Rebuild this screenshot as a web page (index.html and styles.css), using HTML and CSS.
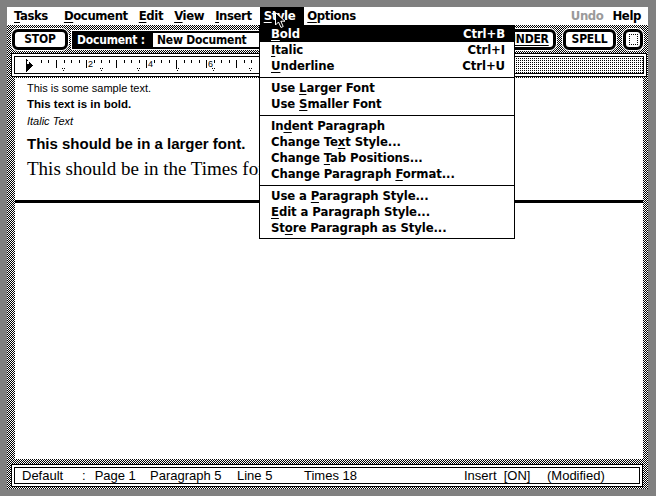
FILE: index.html
```html
<!DOCTYPE html>
<html>
<head>
<meta charset="utf-8">
<title>Write</title>
<link rel="stylesheet" href="styles.css">
</head>
<body>
<div class="screen">
  <div class="menubar">
    <span class="mi first"><u>T</u>asks</span>
    <span class="mi"><u>D</u>ocument</span>
    <span class="mi"><u>E</u>dit</span>
    <span class="mi"><u>V</u>iew</span>
    <span class="mi"><u>I</u>nsert</span>
    <span class="mi active"><u>S</u>tyle</span>
    <span class="mi"><u>O</u>ptions</span>
    <span class="spacer"></span>
    <span class="mi disabled">Undo</span>
    <span class="mi last">Help</span>
  </div>
  <div class="work">
    <div class="toolbar">
      <div class="btn stop">STOP</div>
      <div class="docgroup">
        <div class="doclabel">Document :</div>
        <div class="docfield">New Document</div>
      </div>
      <div class="btn under"><u>UNDER</u></div>
      <div class="btn spell">SPELL</div>
      <div class="btn small"><span class="icon"></span></div>
    </div>
    <div class="ruler">
      <svg class="ruler-svg" width="628" height="16" viewBox="0 0 628 16" shape-rendering="crispEdges">
        <defs>
          <pattern id="stip" width="2" height="2" patternUnits="userSpaceOnUse">
            <rect x="0" y="0" width="2" height="2" fill="#fff"/>
            <rect x="1" y="1" width="1" height="1" fill="#000"/>
          </pattern>
        </defs>
        <polygon points="11,2 11,15 18,8.5" fill="#000"/>
        <rect x="12" y="4" width="2" height="3" fill="#fff"/>
        <g fill="#000">
          <rect x="26" y="3" width="1" height="3"/><rect x="33" y="3" width="1" height="3"/>
          <rect x="41" y="3" width="1" height="8"/>
          <rect x="49" y="3" width="1" height="3"/><rect x="56" y="3" width="1" height="3"/><rect x="64" y="3" width="1" height="3"/>
          <rect x="71" y="3" width="1" height="8"/>
          <rect x="79" y="3" width="1" height="3"/><rect x="86" y="3" width="1" height="3"/><rect x="94" y="3" width="1" height="3"/>
          <rect x="101" y="3" width="1" height="8"/>
          <rect x="109" y="3" width="1" height="3"/><rect x="116" y="3" width="1" height="3"/><rect x="124" y="3" width="1" height="3"/>
          <rect x="131" y="3" width="1" height="8"/>
          <rect x="139" y="3" width="1" height="3"/><rect x="146" y="3" width="1" height="3"/><rect x="154" y="3" width="1" height="3"/>
          <rect x="161" y="3" width="1" height="8"/>
          <rect x="169" y="3" width="1" height="3"/><rect x="176" y="3" width="1" height="3"/><rect x="184" y="3" width="1" height="3"/>
          <rect x="191" y="3" width="1" height="8"/>
          <rect x="199" y="3" width="1" height="3"/><rect x="206" y="3" width="1" height="3"/><rect x="214" y="3" width="1" height="3"/>
          <rect x="221" y="3" width="1" height="8"/>
          <rect x="229" y="3" width="1" height="3"/><rect x="236" y="3" width="1" height="3"/><rect x="244" y="3" width="1" height="3"/>
          <rect x="251" y="3" width="1" height="8"/>
          <rect x="259" y="3" width="1" height="3"/><rect x="266" y="3" width="1" height="3"/><rect x="274" y="3" width="1" height="3"/>
          <rect x="281" y="3" width="1" height="8"/>
          <rect x="289" y="3" width="1" height="3"/><rect x="296" y="3" width="1" height="3"/><rect x="304" y="3" width="1" height="3"/>
          <rect x="311" y="3" width="1" height="8"/>
          <rect x="319" y="3" width="1" height="3"/><rect x="326" y="3" width="1" height="3"/><rect x="334" y="3" width="1" height="3"/>
          <rect x="341" y="3" width="1" height="8"/>
          <rect x="349" y="3" width="1" height="3"/><rect x="356" y="3" width="1" height="3"/><rect x="364" y="3" width="1" height="3"/>
          <rect x="371" y="3" width="1" height="8"/>
          <rect x="379" y="3" width="1" height="3"/><rect x="386" y="3" width="1" height="3"/><rect x="394" y="3" width="1" height="3"/>
          <rect x="401" y="3" width="1" height="8"/>
          <rect x="409" y="3" width="1" height="3"/><rect x="416" y="3" width="1" height="3"/><rect x="424" y="3" width="1" height="3"/>
          <rect x="431" y="3" width="1" height="8"/>
          <rect x="439" y="3" width="1" height="3"/><rect x="446" y="3" width="1" height="3"/><rect x="454" y="3" width="1" height="3"/>
        </g>
        <g fill="#000">
          <rect x="47" y="11" width="1" height="1"/><rect x="49" y="11" width="1" height="1"/><rect x="48" y="13" width="1" height="1"/>
          <rect x="85" y="11" width="1" height="1"/><rect x="87" y="11" width="1" height="1"/><rect x="86" y="13" width="1" height="1"/>
          <rect x="122" y="11" width="1" height="1"/><rect x="124" y="11" width="1" height="1"/><rect x="123" y="13" width="1" height="1"/>
          <rect x="161" y="11" width="1" height="1"/><rect x="163" y="11" width="1" height="1"/><rect x="162" y="13" width="1" height="1"/>
          <rect x="197" y="11" width="1" height="1"/><rect x="199" y="11" width="1" height="1"/><rect x="198" y="13" width="1" height="1"/>
          <rect x="234" y="11" width="1" height="1"/><rect x="236" y="11" width="1" height="1"/><rect x="235" y="13" width="1" height="1"/>
          <rect x="272" y="11" width="1" height="1"/><rect x="274" y="11" width="1" height="1"/><rect x="273" y="13" width="1" height="1"/>
          <rect x="310" y="11" width="1" height="1"/><rect x="312" y="11" width="1" height="1"/><rect x="311" y="13" width="1" height="1"/>
        </g>
        <g class="ruler-num" fill="#000">
          <text x="73" y="10">2</text>
          <text x="133" y="10">4</text>
          <text x="193" y="10">6</text>
        </g>
        <rect x="466" y="0" width="162" height="16" fill="url(#stip)"/>
      </svg>
    </div>
    <div class="doc">
      <div class="pane pane-top">
        <div class="l1">This is some sample text.</div>
        <div class="l2">This text is in bold.</div>
        <div class="l3">Italic Text</div>
        <div class="l4">This should be in a larger font.</div>
        <div class="l5">This should be in the Times font.</div>
      </div>
      <div class="divider"></div>
      <div class="pane pane-bottom"></div>
    </div>
    <div class="status">
      <span class="st-default">Default</span>
      <span class="st-page"><span class="colon">:</span>Page 1</span>
      <span class="st-para">Paragraph 5</span>
      <span class="st-line">Line 5</span>
      <span class="st-font">Times 18</span>
      <span class="st-ins">Insert&nbsp;&nbsp;[ON]</span>
      <span class="st-mod">(Modified)</span>
    </div>
  </div>
</div>

<div class="dropdown">
  <div class="it sel"><span><u>B</u>old</span><span>Ctrl+B</span></div>
  <div class="it"><span><u>I</u>talic</span><span>Ctrl+I</span></div>
  <div class="it"><span><u>U</u>nderline</span><span>Ctrl+U</span></div>
  <div class="sep"></div>
  <div class="it"><span>Use <u>L</u>arger Font</span></div>
  <div class="it"><span>Use <u>S</u>maller Font</span></div>
  <div class="sep"></div>
  <div class="it"><span>In<u>d</u>ent Paragraph</span></div>
  <div class="it"><span>Change Te<u>x</u>t Style...</span></div>
  <div class="it"><span>Change <u>T</u>ab Positions...</span></div>
  <div class="it"><span>Change Paragraph <u>F</u>ormat...</span></div>
  <div class="sep"></div>
  <div class="it"><span>Use a <u>P</u>aragraph Style...</span></div>
  <div class="it"><span><u>E</u>dit a Paragraph Style...</span></div>
  <div class="it"><span>St<u>o</u>re Paragraph as Style...</span></div>
</div>

<svg class="cursor" width="11" height="17" viewBox="0 0 11 17">
  <path d="M0.5 0.5 L0.5 13 L3.5 10 L6 15.5 L8.2 14.5 L5.8 9.2 L10 9.2 Z" fill="#000" stroke="#fff" stroke-width="1"/>
</svg>
</body>
</html>
```

FILE: styles.css
```css
html, body {
  margin: 0;
  padding: 0;
  background: #808080;
}

body {
  width: 656px;
  height: 496px;
  overflow: hidden;
  position: relative;
}

.screen {
  margin: 7px;
  width: 641px;
  height: 482px;
  display: flex;
  flex-direction: column;
}

u {
  text-decoration: underline;
  text-decoration-thickness: 1px;
  text-underline-offset: 2px;
}

/* menu bar */
.menubar {
  height: 18px;
  flex: none;
  background: #fff;
  display: flex;
  padding: 0 3px 0 3px;
  font-family: "DejaVu Sans Condensed", "DejaVu Sans", sans-serif;
  font-stretch: condensed;
  font-weight: bold;
  font-size: 13px;
  line-height: 18px;
  letter-spacing: -0.4px;
  color: #000;
}

.mi {
  padding: 0 4px;
  margin-right: 3px;
  white-space: nowrap;
}

.mi.first {
  margin-right: 8px;
}

.mi.active {
  background: #000;
  color: #fff;
  padding: 0 9px 0 4px;
  margin-left: 1px;
  margin-right: -1px;
}

.mi.disabled {
  color: #9a9a9a;
  margin-right: 1px;
}

.mi.last {
  margin-right: 0;
}

.spacer {
  flex: 1;
}

/* work area with dither */
.work {
  flex: 1;
  display: flex;
  flex-direction: column;
  background: repeating-conic-gradient(#000 0 25%, #fff 0 50%) 0 0 / 2px 2px;
}

.toolbar {
  height: 27px;
  flex: none;
  box-sizing: border-box;
  display: flex;
  align-items: flex-start;
  padding: 4px 5px 0 5px;
  font-family: "DejaVu Sans Condensed", "DejaVu Sans", sans-serif;
  font-stretch: condensed;
  font-weight: bold;
  font-size: 12px;
  letter-spacing: -0.2px;
}

.btn {
  box-sizing: border-box;
  height: 21px;
  border: 3px solid #000;
  border-radius: 6px;
  background: #fff;
  box-shadow: 0 0 0 1px #fff;
  display: flex;
  align-items: center;
  justify-content: center;
  line-height: 15px;
  flex: none;
}

.stop {
  width: 56px;
}

.docgroup {
  margin-left: 4px;
  margin-top: 2px;
  height: 18px;
  box-sizing: border-box;
  border: 2px solid #000;
  box-shadow: 0 0 0 1px #fff;
  display: flex;
  line-height: 14px;
}

.doclabel {
  width: 79px;
  box-sizing: border-box;
  padding-left: 3px;
  background: #000;
  color: #fff;
  white-space: nowrap;
}

.docfield {
  width: 250px;
  padding-left: 4px;
  background: #fff;
  white-space: nowrap;
}

.under {
  margin-left: auto;
  width: 56px;
}

.spell {
  margin-left: 7px;
  width: 53px;
}

.small {
  margin-left: 7px;
  width: 20px;
}

.icon {
  display: block;
  flex: none;
  width: 9px;
  height: 11px;
  box-sizing: border-box;
  border: 1px dotted #000;
}

/* ruler */
.ruler {
  flex: none;
  margin: 1px 1px 0 4px;
  height: 24px;
  box-sizing: border-box;
  border: 1px solid #000;
  padding: 3px;
  background: #fff;
  box-shadow: inset 0 0 0 2px #fff, inset 0 0 0 3px #000;
}

.ruler-svg {
  display: block;
}

.ruler-num {
  font-family: "Liberation Sans", Arial, sans-serif;
  font-size: 9px;
}

/* document */
.doc {
  flex: none;
  margin: 1px 5px 0 8px;
  height: 381px;
  display: flex;
  flex-direction: column;
  background: #fff;
}

.pane-top {
  height: 122px;
  flex: none;
  box-sizing: border-box;
  padding: 2px 0 0 12px;
  overflow: hidden;
  font-family: "Liberation Sans", Arial, sans-serif;
  color: #000;
  white-space: nowrap;
}

.l1 { font-size: 11px; line-height: 16px; }
.l2 { font-size: 11.5px; line-height: 16px; font-weight: bold; }
.l3 { font-size: 11px; line-height: 18px; font-style: italic; }
.l4 { font-size: 15px; line-height: 27px; font-weight: bold; }
.l5 {
  font-family: "Liberation Serif", "Times New Roman", serif;
  font-size: 19px;
  line-height: 23px;
}

.divider {
  height: 3px;
  flex: none;
  background: #000;
}

.pane-bottom {
  flex: 1;
}

/* status bar */
.status {
  flex: none;
  margin: 5px 5px 0 4px;
  height: 23px;
  box-sizing: border-box;
  border: 1px solid #000;
  padding: 3px 3px 3px 10px;
  background: #fff;
  box-shadow: inset 0 0 0 2px #fff, inset 0 0 0 3px #000;
  display: flex;
  font-family: "Liberation Sans", Arial, sans-serif;
  font-size: 13px;
  line-height: 15px;
  white-space: nowrap;
}

.st-default { width: 60px; }
.st-page { width: 68px; }
.colon { margin-right: 9px; }
.st-para { width: 87px; }
.st-line { width: 67px; }
.st-font { width: 160px; }
.st-ins { width: 83px; }

/* dropdown menu */
.dropdown {
  position: absolute;
  left: 259px;
  top: 25px;
  width: 256px;
  box-sizing: border-box;
  border: 1px solid #000;
  background: #fff;
  padding-bottom: 2px;
  font-family: "DejaVu Sans Condensed", "DejaVu Sans", sans-serif;
  font-stretch: condensed;
  font-weight: bold;
  font-size: 13px;
  letter-spacing: -0.1px;
  color: #000;
}

.it {
  height: 16px;
  line-height: 16px;
  display: flex;
  justify-content: space-between;
  padding: 0 9px 0 11px;
  white-space: nowrap;
}

.it.sel {
  background: #000;
  color: #fff;
}

.sep {
  height: 1px;
  background: #000;
  margin: 3px 0 2px;
}

.cursor {
  position: absolute;
  left: 275px;
  top: 12px;
}
```
